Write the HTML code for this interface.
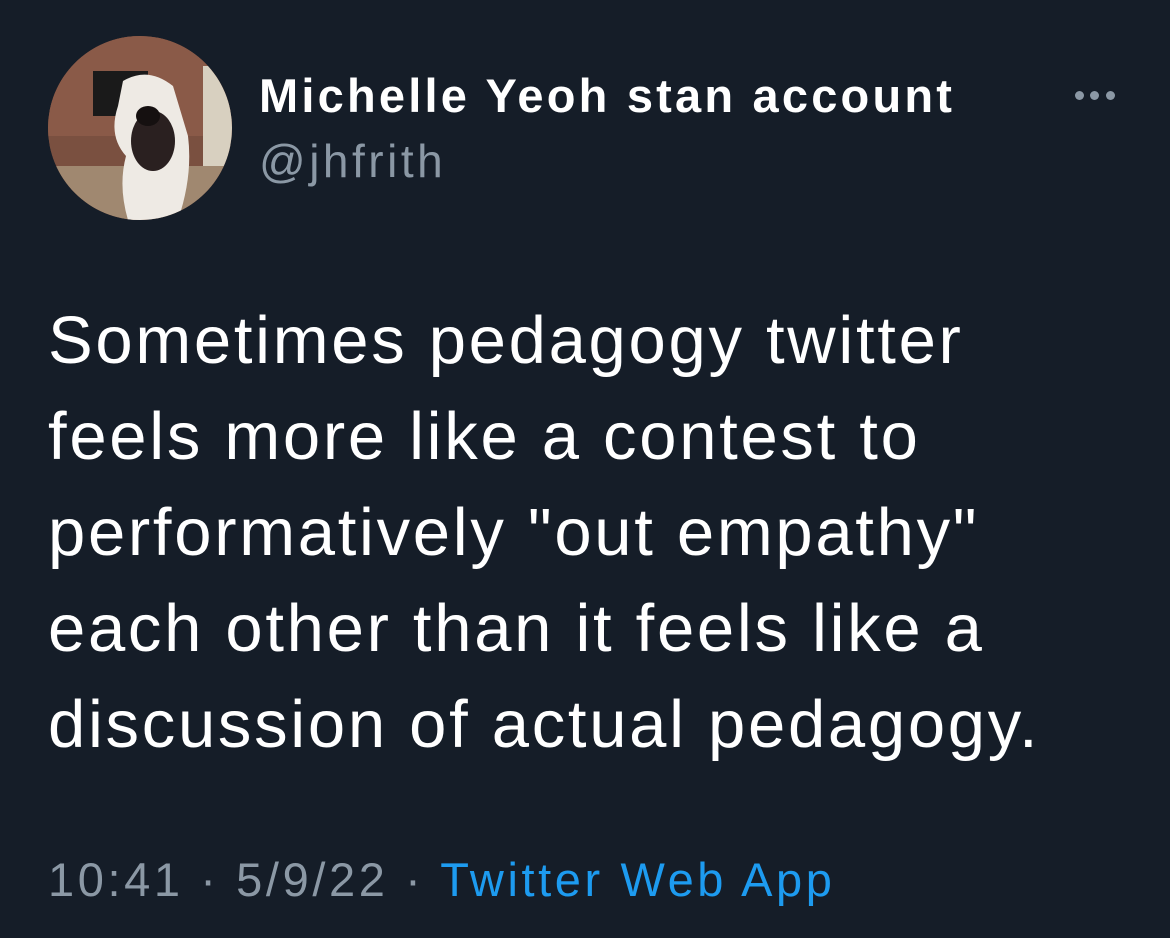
<!DOCTYPE html>
<html><head><style>
html,body{margin:0;padding:0;width:1170px;height:938px;background:#151d28;overflow:hidden;font-family:"Liberation Sans",Arial,sans-serif;}
.av{position:absolute;left:48px;top:36px;width:184px;height:184px;border-radius:50%;overflow:hidden;background:#6b4a3a;}
.name{position:absolute;left:259px;top:68px;font-size:47px;font-weight:bold;color:#fff;white-space:nowrap;letter-spacing:3.2px}
.handle{position:absolute;left:259px;top:134px;font-size:46px;color:#8b98a5;letter-spacing:3.5px}
.dot{position:absolute;top:91px;width:9px;height:9px;border-radius:50%;background:#8b98a5}
.body{position:absolute;left:48px;top:293px;font-size:67px;line-height:96px;color:#fff;white-space:nowrap;letter-spacing:2.7px}
.foot{position:absolute;left:48px;top:852px;font-size:47px;color:#8b98a5;white-space:nowrap;letter-spacing:3.6px}
.foot a{color:#1d9bf0;text-decoration:none}
</style></head><body>
<div class="av">
<svg width="184" height="184" viewBox="0 0 184 184">
<rect width="184" height="184" fill="#7a5040"/>
<rect x="0" y="0" width="184" height="100" fill="#8a5a48"/>
<rect x="45" y="35" width="55" height="45" fill="#1a1a1a"/>
<rect x="155" y="30" width="40" height="100" fill="#d8d0c0"/>
<rect x="0" y="130" width="184" height="60" fill="#a08870"/>
<path d="M75 45 Q100 30 125 50 L140 100 Q145 140 130 184 L80 184 Q70 150 78 120 Q60 100 70 70 Z" fill="#eeeae4"/>
<ellipse cx="105" cy="105" rx="22" ry="30" fill="#2a2020"/>
<ellipse cx="100" cy="80" rx="12" ry="10" fill="#151010"/>
</svg>
</div>
<div class="name">Michelle Yeoh stan account</div>
<div class="handle">@jhfrith</div>
<div class="dot" style="left:1075px"></div><div class="dot" style="left:1090px"></div><div class="dot" style="left:1106px"></div>
<div class="body">Sometimes pedagogy twitter<br>feels more like a contest to<br>performatively "out empathy"<br>each other than it feels like a<br>discussion of actual pedagogy.</div>
<div class="foot">10:41 · 5/9/22 · <a>Twitter Web App</a></div>
</body></html>
